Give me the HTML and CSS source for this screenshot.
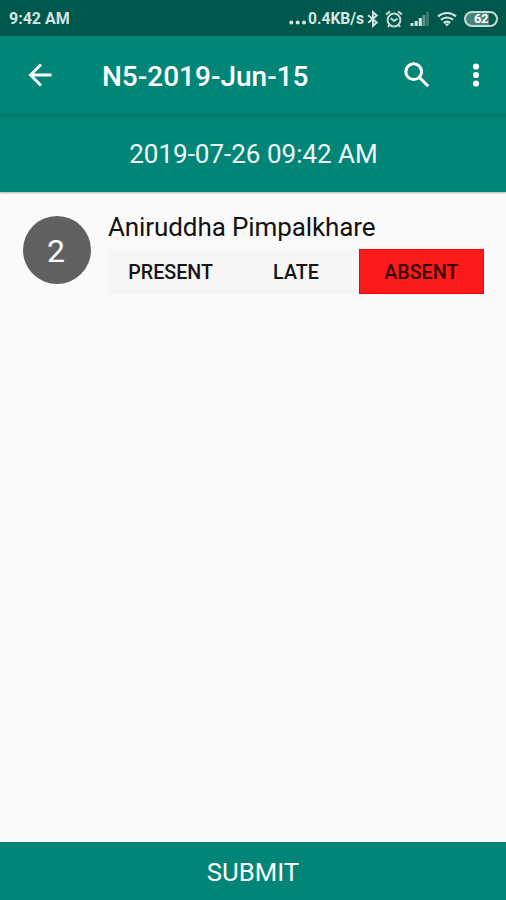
FILE: index.html
```html
<!DOCTYPE html>
<html lang="en">
<head>
    <meta charset="UTF-8">
    <meta name="viewport" content="width=device-width, initial-scale=1.0">
    <title>Attendance</title>
    <link rel="stylesheet" href="styles.css">
</head>
<body>
    <div class="statusbar">
        <span class="clock">9:42 AM</span>
        <div class="status-icons">
            <svg class="dots" width="18" height="16" viewBox="0 0 18 16" fill="#d5e5e2">
                <circle cx="2.3" cy="11.5" r="2"/>
                <circle cx="8.7" cy="11.5" r="2"/>
                <circle cx="15" cy="11.5" r="2"/>
            </svg>
            <span class="speed">0.4KB/s</span>
            <svg class="bluetooth" width="12" height="18" viewBox="0 0 12 18" fill="none" stroke="#d5e5e2" stroke-width="1.9">
                <path d="M1.2 5.2l8.6 7.3-3.8 3.3V2.2l3.8 3.3-8.6 7.3"/>
            </svg>
            <svg class="alarm" width="18" height="18" viewBox="0 0 18 18" fill="none" stroke="#c5dad6" stroke-width="2">
                <circle cx="9" cy="10" r="6.4"/>
                <path d="M1 4.5L5 1.4M17 4.5l-4-3.1M5.7 8.2L9 11l3.5-2.5M4.5 15L3 17M13.5 15l1.5 2"/>
            </svg>
            <svg class="signal" width="20" height="16" viewBox="0 0 20 16" fill="#d5e5e2">
                <rect x="0.5" y="12" width="3" height="3"/>
                <rect x="4.7" y="10" width="3" height="5"/>
                <rect x="8.8" y="7" width="3" height="8"/>
                <rect x="12.4" y="4" width="3" height="11" fill="#5f9289"/>
                <rect x="16" y="1" width="3" height="14" fill="#38786e"/>
            </svg>
            <svg class="wifi" width="20" height="16" viewBox="0 0 20 16" fill="none" stroke="#d5e5e2" stroke-width="2.1">
                <path d="M1 5.5c5.3-4.6 12.7-4.6 18 0M3.9 8.8c3.6-3.1 8.6-3.1 12.2 0M6.7 11.9c2-1.6 4.6-1.6 6.6 0"/>
                <path d="M7.5 12.5h5L10 15.5z" fill="#d5e5e2" stroke="none"/>
            </svg>
            <div class="battery"><span>62</span></div>
        </div>
    </div>

    <div class="toolbar">
        <svg class="back" width="24" height="24" viewBox="0 0 24 24" fill="none" stroke="#fff" stroke-width="2.9">
            <path d="M23.5 12H2.5M13 1.5L2.5 12 13 22.5"/>
        </svg>
        <h1>N5-2019-Jun-15</h1>
        <svg class="search" width="26" height="26" viewBox="0 0 26 26" fill="none" stroke="#fff" stroke-width="3">
            <circle cx="9.7" cy="9.7" r="7.9"/>
            <path d="M15.5 15.5l8.7 8.7"/>
        </svg>
        <svg class="more" width="8" height="24" viewBox="0 0 8 24" fill="#fff">
            <circle cx="4" cy="3.5" r="3.1"/>
            <circle cx="4" cy="12" r="3.1"/>
            <circle cx="4" cy="20.5" r="3.1"/>
        </svg>
    </div>

    <div class="datebar">2019-07-26 09:42 AM</div>

    <div class="list">
        <div class="student">
            <div class="roll">2</div>
            <div class="info">
                <div class="name">Aniruddha Pimpalkhare</div>
                <div class="buttons">
                    <button>PRESENT</button>
                    <button>LATE</button>
                    <button class="absent">ABSENT</button>
                </div>
            </div>
        </div>
    </div>

    <button class="submit">SUBMIT</button>
</body>
</html>
```
FILE: styles.css
```css
* {
    box-sizing: border-box;
}

body {
    display: flex;
    flex-direction: column;
    height: 100vh;
    margin: 0;
    background-color: #fafafa;
    font-family: Roboto, sans-serif;
}

svg {
    flex: none;
}

button {
    border: none;
    padding: 0;
    font-family: inherit;
}

.statusbar {
    display: flex;
    justify-content: space-between;
    align-items: center;
    height: 36px;
    padding: 1px 8px 0 9px;
    background-color: #00574b;
    color: #d5e5e2;
    font-size: 16px;
    font-weight: 700;
    white-space: nowrap;
}

.clock {
    width: 61px;
}

.status-icons {
    display: flex;
    align-items: center;
}

.speed {
    width: 56px;
    margin-left: 1px;
    font-size: 15.6px;
}

.bluetooth {
    margin-left: 3px;
}

.alarm {
    margin-left: 6px;
}

.signal {
    margin-left: 7px;
}

.wifi {
    margin-left: 7px;
}

.battery {
    display: flex;
    justify-content: center;
    align-items: center;
    width: 34px;
    height: 16px;
    margin-left: 7px;
    border: 2px solid #c5dad6;
    border-radius: 8px;
    background: linear-gradient(to right, #4b8379 78%, #00574b 78%);
    color: #fff;
    font-size: 13px;
    letter-spacing: -0.5px;
}

.toolbar {
    display: flex;
    align-items: center;
    height: 78px;
    padding: 0 26px 0 28px;
    background-color: #008577;
    color: #fff;
}

.toolbar h1 {
    flex: 1;
    margin: 0 0 0 50px;
    padding-top: 3px;
    font-size: 28px;
    font-weight: 500;
}

.search {
    margin-bottom: 1px;
}

.more {
    margin-left: 42px;
}

.datebar {
    display: flex;
    justify-content: center;
    align-items: center;
    height: 78px;
    padding: 2px 0 0 1px;
    background: linear-gradient(#00756a, #008577 5px);
    color: #f0faf8;
    font-size: 26px;
    box-shadow: 0 1px 2px rgba(0, 0, 0, 0.3);
}

.list {
    flex: 1;
    padding: 18px 22px 0 23px;
}

.student {
    display: flex;
}

.roll {
    display: flex;
    justify-content: center;
    align-items: center;
    width: 68px;
    height: 68px;
    margin-top: 6px;
    padding: 2px 2px 0 0;
    border-radius: 50%;
    background-color: #616161;
    color: #fff;
    font-size: 32px;
}

.info {
    flex: 1;
    margin-left: 17px;
}

.name {
    height: 39px;
    line-height: 34px;
    color: #111;
    font-size: 26px;
    letter-spacing: -0.1px;
    white-space: nowrap;
}

.buttons {
    display: grid;
    grid-template-columns: repeat(3, 1fr);
    height: 45px;
    background-color: #f6f6f6;
}

.buttons button {
    padding-top: 2px;
    background-color: transparent;
    color: #151515;
    font-size: 19.7px;
    font-weight: 500;
}

.buttons .absent {
    border: 1px solid #f00;
    background-color: #fc1b1b;
    color: #380303;
}

.submit {
    height: 58px;
    padding-top: 2px;
    background-color: #008577;
    color: #fff;
    font-size: 25.7px;
}
```
